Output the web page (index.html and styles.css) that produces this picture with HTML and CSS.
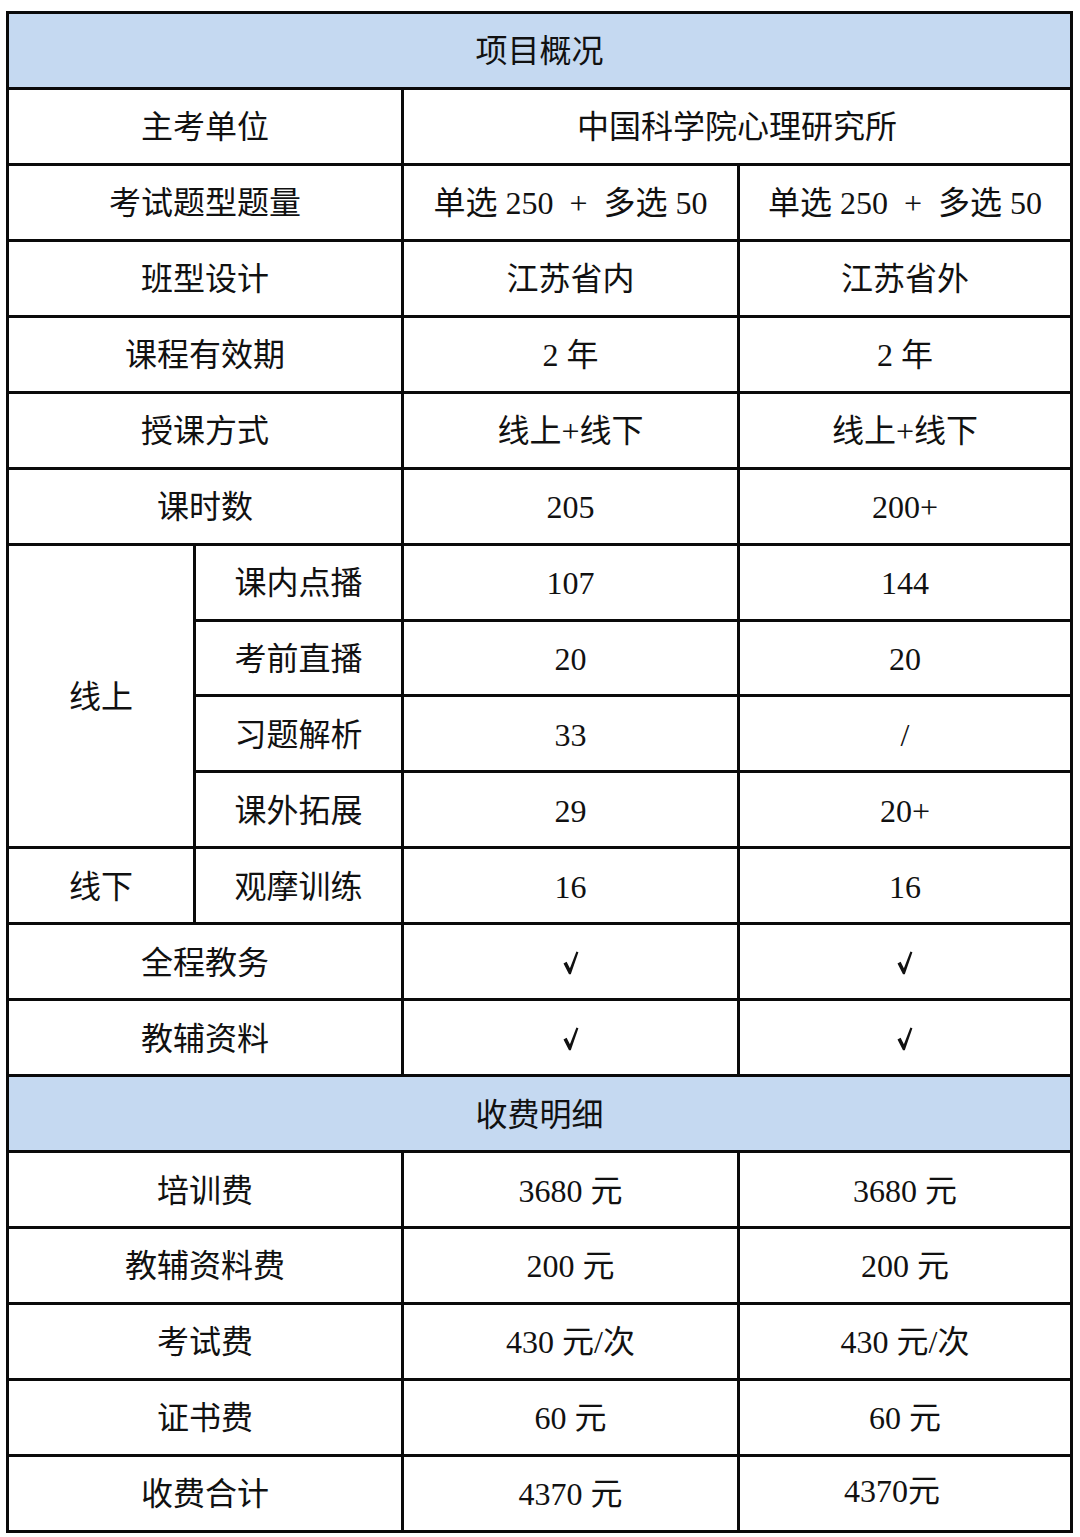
FILE: index.html
```html
<!DOCTYPE html>
<html lang="zh-CN">
<head>
<meta charset="utf-8">
<title>项目概况</title>
<link rel="stylesheet" href="styles.css">
</head>
<body>
<div class="sheet" role="table">
  <div class="cell head span4">项目概况</div>

  <div class="cell span2">主考单位</div>
  <div class="cell span2">中国科学院心理研究所</div>

  <div class="cell span2">考试题型题量</div>
  <div class="cell">单选 250&ensp;+&ensp;多选 50</div>
  <div class="cell">单选 250&ensp;+&ensp;多选 50</div>

  <div class="cell span2">班型设计</div>
  <div class="cell">江苏省内</div>
  <div class="cell">江苏省外</div>

  <div class="cell span2">课程有效期</div>
  <div class="cell">2 年</div>
  <div class="cell">2 年</div>

  <div class="cell span2">授课方式</div>
  <div class="cell">线上+线下</div>
  <div class="cell">线上+线下</div>

  <div class="cell span2">课时数</div>
  <div class="cell">205</div>
  <div class="cell">200+</div>

  <div class="cell rows4">线上</div>
  <div class="cell">课内点播</div>
  <div class="cell">107</div>
  <div class="cell">144</div>
  <div class="cell">考前直播</div>
  <div class="cell">20</div>
  <div class="cell">20</div>
  <div class="cell">习题解析</div>
  <div class="cell">33</div>
  <div class="cell">/</div>
  <div class="cell">课外拓展</div>
  <div class="cell">29</div>
  <div class="cell">20+</div>

  <div class="cell">线下</div>
  <div class="cell">观摩训练</div>
  <div class="cell">16</div>
  <div class="cell">16</div>

  <div class="cell span2">全程教务</div>
  <div class="cell"><svg class="tick" viewBox="0 0 16 24" aria-label="√"><path d="M0.5 12.5 L3.6 10.8 L6.9 17.2 L13.4 0.6 L15.4 1.2 L7.8 23.2 L6 23.2 Z"/></svg></div>
  <div class="cell"><svg class="tick" viewBox="0 0 16 24" aria-label="√"><path d="M0.5 12.5 L3.6 10.8 L6.9 17.2 L13.4 0.6 L15.4 1.2 L7.8 23.2 L6 23.2 Z"/></svg></div>

  <div class="cell span2">教辅资料</div>
  <div class="cell"><svg class="tick" viewBox="0 0 16 24" aria-label="√"><path d="M0.5 12.5 L3.6 10.8 L6.9 17.2 L13.4 0.6 L15.4 1.2 L7.8 23.2 L6 23.2 Z"/></svg></div>
  <div class="cell"><svg class="tick" viewBox="0 0 16 24" aria-label="√"><path d="M0.5 12.5 L3.6 10.8 L6.9 17.2 L13.4 0.6 L15.4 1.2 L7.8 23.2 L6 23.2 Z"/></svg></div>

  <div class="cell head span4">收费明细</div>

  <div class="cell span2">培训费</div>
  <div class="cell">3680 元</div>
  <div class="cell">3680 元</div>

  <div class="cell span2">教辅资料费</div>
  <div class="cell">200 元</div>
  <div class="cell">200 元</div>

  <div class="cell span2">考试费</div>
  <div class="cell">430 元/次</div>
  <div class="cell">430 元/次</div>

  <div class="cell span2">证书费</div>
  <div class="cell">60 元</div>
  <div class="cell">60 元</div>

  <div class="cell span2">收费合计</div>
  <div class="cell">4370 元</div>
  <div class="cell lifted">4370元</div>
</div>
</body>
</html>
```

FILE: styles.css
```css
html, body {
  margin: 0;
  padding: 0;
  background: #ffffff;
}

body {
  font-family: "Liberation Serif", "Noto Sans CJK SC", serif;
  font-size: 32px;
  color: #111111;
}

.sheet {
  display: grid;
  grid-template-columns: 184px 205px 333px 330px;
  grid-auto-rows: 72.95px;
  gap: 3px;
  padding: 3px;
  background: #0a0a0a;
  width: max-content;
  margin: 11px 0 0 6px;
}

.cell {
  background: #ffffff;
  display: flex;
  align-items: center;
  justify-content: center;
  white-space: nowrap;
  line-height: 1;
  padding-top: 2px;
}

.head {
  background: #c5d9f1;
}

.span2 {
  grid-column: span 2;
}

.span4 {
  grid-column: span 4;
}

.rows4 {
  grid-row: span 4;
}

.tick {
  width: 16px;
  height: 24px;
  fill: #111111;
}

.lifted {
  padding-top: 0;
  padding-bottom: 4px;
  padding-right: 26px;
}
```
